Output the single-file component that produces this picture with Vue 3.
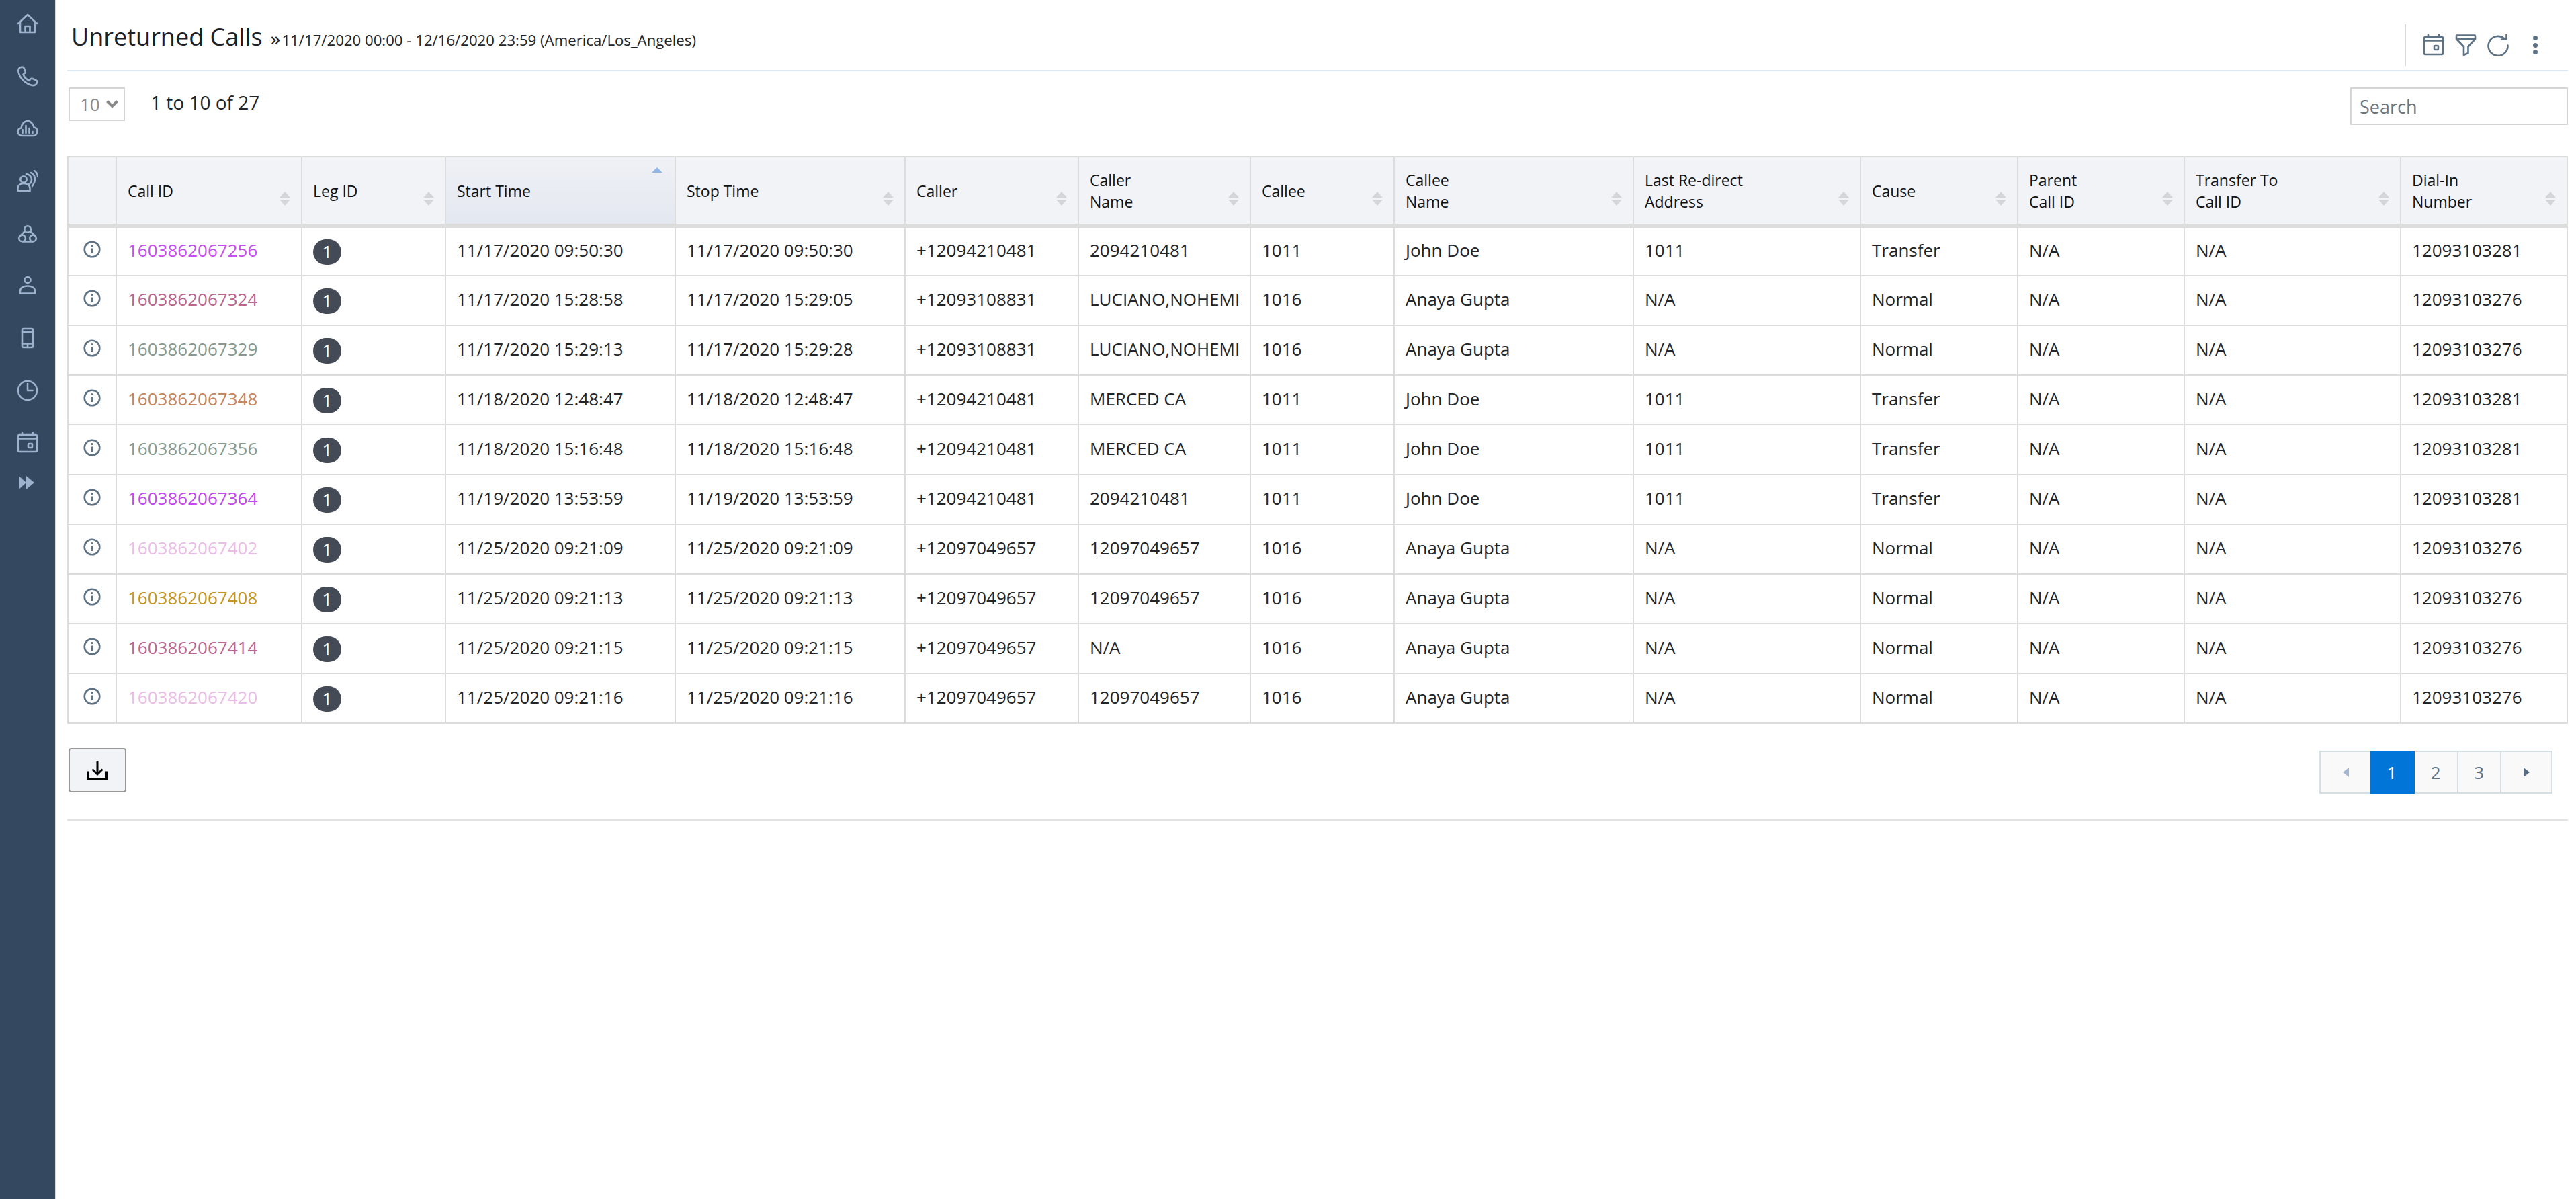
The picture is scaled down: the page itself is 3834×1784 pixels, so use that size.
<script setup>
const columns = [
  { key: 'info', label: [], width: 72 },
  { key: 'id', label: ['Call ID'], width: 276 },
  { key: 'leg', label: ['Leg ID'], width: 214 },
  { key: 'start', label: ['Start Time'], width: 342, sorted: true },
  { key: 'stop', label: ['Stop Time'], width: 342 },
  { key: 'caller', label: ['Caller'], width: 258 },
  { key: 'callerName', label: ['Caller', 'Name'], width: 256 },
  { key: 'callee', label: ['Callee'], width: 214 },
  { key: 'calleeName', label: ['Callee', 'Name'], width: 356 },
  { key: 'redirect', label: ['Last Re-direct', 'Address'], width: 338 },
  { key: 'cause', label: ['Cause'], width: 234 },
  { key: 'parent', label: ['Parent', 'Call ID'], width: 248 },
  { key: 'transfer', label: ['Transfer To', 'Call ID'], width: 322 },
  { key: 'dial', label: ['Dial-In', 'Number'], width: 248 }
]

// widths above follow the table's real column sizes
const johnDoe = { callee: '1011', calleeName: 'John Doe', redirect: '1011', cause: 'Transfer', dial: '12093103281' }
const anaya = { callee: '1016', calleeName: 'Anaya Gupta', redirect: 'N/A', cause: 'Normal', dial: '12093103276' }

const rows = [
  { id: '1603862067256', color: '#c64df0', start: '11/17/2020 09:50:30', stop: '11/17/2020 09:50:30', caller: '+12094210481', callerName: '2094210481', ...johnDoe },
  { id: '1603862067324', color: '#b9658f', start: '11/17/2020 15:28:58', stop: '11/17/2020 15:29:05', caller: '+12093108831', callerName: 'LUCIANO,NOHEMI', ...anaya },
  { id: '1603862067329', color: '#85998f', start: '11/17/2020 15:29:13', stop: '11/17/2020 15:29:28', caller: '+12093108831', callerName: 'LUCIANO,NOHEMI', ...anaya },
  { id: '1603862067348', color: '#c4845d', start: '11/18/2020 12:48:47', stop: '11/18/2020 12:48:47', caller: '+12094210481', callerName: 'MERCED CA', ...johnDoe },
  { id: '1603862067356', color: '#85998f', start: '11/18/2020 15:16:48', stop: '11/18/2020 15:16:48', caller: '+12094210481', callerName: 'MERCED CA', ...johnDoe },
  { id: '1603862067364', color: '#c247f0', start: '11/19/2020 13:53:59', stop: '11/19/2020 13:53:59', caller: '+12094210481', callerName: '2094210481', ...johnDoe },
  { id: '1603862067402', color: '#ebbce8', start: '11/25/2020 09:21:09', stop: '11/25/2020 09:21:09', caller: '+12097049657', callerName: '12097049657', ...anaya },
  { id: '1603862067408', color: '#c39420', start: '11/25/2020 09:21:13', stop: '11/25/2020 09:21:13', caller: '+12097049657', callerName: '12097049657', ...anaya },
  { id: '1603862067414', color: '#b9658f', start: '11/25/2020 09:21:15', stop: '11/25/2020 09:21:15', caller: '+12097049657', callerName: 'N/A', ...anaya },
  { id: '1603862067420', color: '#ebbce8', start: '11/25/2020 09:21:16', stop: '11/25/2020 09:21:16', caller: '+12097049657', callerName: '12097049657', ...anaya }
]
</script>

<template>
  <div class="page">
    <!-- Left navigation -->
    <aside class="sidebar">
      <nav class="nav">
        <span class="nav-item">
          <svg viewBox="0 0 32 32" class="icon"><path d="M2 16 16 3l14 13M5 13.5V29h22V13.500M12.500 29v-9h7v9" /></svg>
        </span>
        <span class="nav-item">
          <svg viewBox="0 0 32 32" class="icon"><path d="M6 3C3 4 2 7 2.500 10 4 19 13 28 23 30c3 .5 6-1 7-4 .5-2-.5-3.500-2-4l-4.500-2c-1.500-.5-3 0-4 1.500l-1 1.500c-4.500-2-7.500-5-9-9.500l1.500-1c1.500-1 2-2.500 1.500-4l-2-4.500C9.800 2.800 7.800 2.400 6 3Z" /></svg>
        </span>
        <span class="nav-item">
          <svg viewBox="0 0 32 32" class="icon"><path d="M8 27c-4 0-6.500-3-6.500-6s2-5 5-5.500C7 10 11 5 16 5c5 0 8.500 5 9.500 9.500 3 .5 5 3 5 6 0 3.500-2.500 6.500-6 6.500ZM8.500 18v5M13.500 12v11M18.500 16v7M23.500 21v2" /></svg>
        </span>
        <span class="nav-item">
          <svg viewBox="0 0 32 32" class="icon"><circle cx="10" cy="14" r="4.700" /><path d="M1.500 31v-4c0-4 3.500-7 8.500-7s9.500 3 9.500 7v4ZM14 6c4 0 8 4 8 8 0 3-2 6-4 7M21 4c4 2 6 6 6 10s-2 7-4 10M26 1c3 2 5 5 5 9" /></svg>
        </span>
        <span class="nav-item">
          <svg viewBox="0 0 32 32" class="icon"><circle cx="16" cy="10" r="4.800" /><circle cx="8" cy="23.500" r="4.800" /><circle cx="24" cy="23.500" r="4.800" /><path d="M12 13 5 20M20 13l7 7M8 28.500h16" /></svg>
        </span>
        <span class="nav-item">
          <svg viewBox="0 0 32 32" class="icon"><circle cx="16" cy="7.500" r="4.500" /><path d="M5 27.500V24c0-5 5-7.500 11-7.500S27 19 27 24v3.500Z" /></svg>
        </span>
        <span class="nav-item">
          <svg viewBox="0 0 32 32" class="icon"><rect x="8" y="2" width="16" height="28" rx="2" /><path d="M8 7h16M8 24.500h16M16 24.500V30" /></svg>
        </span>
        <span class="nav-item">
          <svg viewBox="0 0 32 32" class="icon"><circle cx="16" cy="16" r="14" /><path d="M16 6v10h7.500" /></svg>
        </span>
        <span class="nav-item">
          <svg viewBox="0 0 32 32" class="icon"><rect x="2" y="4" width="28" height="25" rx="2" /><path d="M2 9.500h28M8 1v3M24 1v3" /><rect x="17" y="17" width="6" height="6" rx="1" /></svg>
        </span>
        <span class="nav-more">
          <svg viewBox="0 0 32 32" class="icon-solid"><path d="M3 6 14 16 3 26ZM14 6l12 10-12 10Z" /></svg>
        </span>
      </nav>
    </aside>

    <main class="main">
      <header class="topbar">
        <div class="title-group">
          <h1 class="title">Unreturned Calls</h1>
          <span class="chevrons">»</span>
          <span class="range">11/17/2020 00:00 - 12/16/2020 23:59 (America/Los_Angeles)</span>
        </div>
        <div class="tools">
          <svg viewBox="0 0 32 32" class="tool"><rect x="2" y="4" width="28" height="26" rx="2" /><path d="M2 9.500h28M8 1v3M24 1v3" /><rect x="17" y="17" width="6" height="6" rx="1" /></svg>
          <svg viewBox="0 0 32 32" class="tool"><path d="M2 2.500c0-.5.5-1 1-1h26c.5 0 1 .5 1 1V7L19.500 18.500V28L13 31V18.500L2 7ZM2 7h28" /></svg>
          <svg viewBox="0 0 32 32" class="tool"><path d="M25 6A14.500 14.500 0 1 0 30.500 16.500M28.500 0v7.500H21" /></svg>
          <span class="dots"><i></i><i></i><i></i></span>
        </div>
      </header>

      <section class="controls">
        <div class="count-group">
          <div class="page-size">
            <span>10</span>
            <svg viewBox="0 0 18 12" class="chevron"><path d="M1.500 1.500 9 9l7.500-7.500" /></svg>
          </div>
          <span class="count">1 to 10 of 27</span>
        </div>
        <input class="search" type="text" placeholder="Search" />
      </section>

      <table class="grid">
        <colgroup>
          <col v-for="col in columns" :key="col.key" :style="{ width: col.width + 'px' }" />
        </colgroup>
        <thead>
          <tr>
            <th v-for="col in columns" :key="col.key" :class="{ sorted: col.sorted }">
              <span v-for="line in col.label" :key="line" class="th-line">{{ line }}</span>
              <span v-if="col.sorted" class="sort-up"></span>
              <span v-else-if="col.label.length" class="sort"></span>
            </th>
          </tr>
        </thead>
        <tbody>
          <tr v-for="row in rows" :key="row.id">
            <td class="info-cell">
              <svg viewBox="0 0 26 26" class="info">
                <circle cx="13" cy="13" r="11.300" />
                <path d="M13 11.500V19" />
                <circle cx="13" cy="7.600" r="1.700" class="info-dot" />
              </svg>
            </td>
            <td :style="{ color: row.color }">{{ row.id }}</td>
            <td><span class="badge">1</span></td>
            <td>{{ row.start }}</td>
            <td>{{ row.stop }}</td>
            <td>{{ row.caller }}</td>
            <td>{{ row.callerName }}</td>
            <td>{{ row.callee }}</td>
            <td>{{ row.calleeName }}</td>
            <td>{{ row.redirect }}</td>
            <td>{{ row.cause }}</td>
            <td>N/A</td>
            <td>N/A</td>
            <td>{{ row.dial }}</td>
          </tr>
        </tbody>
      </table>

      <footer class="footer">
        <button class="download" type="button">
          <svg viewBox="0 0 30 28" class="download-icon"><path d="M15 1v19M7.500 12.500 15 20l7.500-7.500M1.500 15.500v11h27v-11" /></svg>
        </button>
        <div class="pager">
          <span class="pg arrow prev"><i></i></span>
          <span class="pg num active">1</span>
          <span class="pg num">2</span>
          <span class="pg num">3</span>
          <span class="pg arrow next"><i></i></span>
        </div>
      </footer>
    </main>
  </div>
</template>

<style scoped>
.page {
  display: flex;
  min-height: 1784px;
  background: #fff;
  font-family: "Open Sans", "Liberation Sans", sans-serif;
  color: #212529;
}

/* Sidebar */
.sidebar {
  width: 82px;
  flex: none;
  background: #34485f;
  border-right: 2px solid #d9d9d9;
}

.nav {
  display: flex;
  flex-direction: column;
  align-items: center;
  gap: 8px;
}

.nav-item {
  height: 70px;
  display: flex;
  align-items: center;
  justify-content: center;
}

.nav-more {
  height: 32px;
  display: flex;
  align-items: center;
}

.icon {
  width: 32px;
  height: 32px;
  fill: none;
  stroke: #9db2cd;
  stroke-width: 2.6;
  stroke-linejoin: round;
  stroke-linecap: round;
}

.icon-solid {
  width: 32px;
  height: 32px;
  fill: #9db2cd;
}

/* Main column */
.main {
  flex: 1;
  min-width: 0;
  padding: 0 12px 0 16px;
}

.topbar {
  display: flex;
  justify-content: space-between;
  box-sizing: border-box;
  height: 106px;
  border-bottom: 2px solid #dde8f3;
}

.title-group {
  display: flex;
  align-items: baseline;
  padding: 30px 0 0 6px;
}

.title {
  margin: 0;
  font-size: 36px;
  line-height: 50px;
  font-weight: 400;
  color: #1c2127;
}

.chevrons {
  margin-left: 12px;
  font-size: 30px;
  line-height: 30px;
}

.range {
  font-size: 22.200px;
  line-height: 30px;
  margin-left: 2px;
}

.tools {
  display: flex;
  align-items: center;
  height: 62px;
  margin: 36px 45px 0 0;
  padding-left: 25px;
  gap: 16px;
  border-left: 2px solid #dadada;
}

.tool {
  width: 32px;
  height: 32px;
  fill: none;
  stroke: #5d7285;
  stroke-width: 2.6;
  stroke-linejoin: round;
  stroke-linecap: round;
}

.dots {
  display: flex;
  flex-direction: column;
  gap: 3.500px;
  margin-left: 20px;
}

.dots i {
  display: block;
  width: 7px;
  height: 7px;
  border-radius: 50%;
  background: #5d7285;
}

/* Controls row */
.controls {
  display: flex;
  justify-content: space-between;
  align-items: flex-start;
  margin-top: 24px;
  margin-bottom: 46px;
}

.count-group {
  display: flex;
  align-items: flex-start;
  padding-left: 2px;
}

.page-size {
  width: 84px;
  height: 50px;
  box-sizing: border-box;
  border: 2px solid #d5d5d5;
  padding: 0 8px 0 15px;
  display: flex;
  align-items: center;
  justify-content: space-between;
  font-size: 26px;
  color: #8a8a8a;
}

.chevron {
  width: 18px;
  height: 12px;
  fill: none;
  stroke: #8a8a8a;
  stroke-width: 4;
}

.count {
  margin-left: 38px;
  font-size: 28px;
  line-height: 44px;
}

.search {
  width: 324px;
  height: 56px;
  box-sizing: border-box;
  border: 2px solid #d5d5d5;
  padding: 0 12px;
  font-family: inherit;
  font-size: 27px;
  color: #495057;
  outline: none;
}

.search::placeholder {
  color: #6c757d;
  opacity: 1;
}

/* Table */
.grid {
  width: 3722px;
  border-collapse: collapse;
  table-layout: fixed;
  font-size: 26px;
}

.grid th,
.grid td {
  border: 2px solid #dcdcdc;
  padding: 0 16px;
  text-align: left;
  white-space: nowrap;
}

.grid thead tr {
  height: 103px;
}

.grid tbody tr {
  height: 74px;
}

.grid th {
  position: relative;
  background: #f1f3f7;
  border-bottom-width: 6px;
  font-size: 23px;
  font-weight: 400;
  color: #0e1114;
}

.grid th.sorted {
  background: linear-gradient(180deg, #eff1f6 0%, #e3e7ef 100%);
}

.th-line {
  display: block;
  line-height: 32px;
}

.sort {
  position: absolute;
  top: 51px;
  right: 16px;
  width: 0;
  height: 0;
  border-left: 8px solid transparent;
  border-right: 8px solid transparent;
  border-bottom: 9px solid #d3d5da;
}

.sort::after {
  content: '';
  position: absolute;
  top: 12px;
  left: -8px;
  width: 0;
  height: 0;
  border-left: 8px solid transparent;
  border-right: 8px solid transparent;
  border-top: 9px solid #d3d5da;
}

.sort-up {
  position: absolute;
  top: 15px;
  right: 18px;
  width: 0;
  height: 0;
  border-left: 8px solid transparent;
  border-right: 8px solid transparent;
  border-bottom: 8px solid #8fb6e4;
}

.grid td {
  padding-bottom: 5px;
  line-height: 30px;
}

.grid td.info-cell {
  padding: 0 0 7px;
  text-align: center;
}

.info {
  display: block;
  width: 26px;
  height: 26px;
  margin: 0 auto;
  fill: none;
  stroke: #5f7385;
  stroke-width: 2.600;
}

.info-dot {
  fill: #5f7385;
  stroke: none;
}

.badge {
  display: inline-block;
  width: 42px;
  height: 38px;
  line-height: 36px;
  border-radius: 19px;
  background: #444b56;
  color: #fff;
  text-align: center;
  vertical-align: middle;
  margin-top: 6px;
}

/* Footer */
.footer {
  display: flex;
  justify-content: space-between;
  align-items: flex-start;
  box-sizing: border-box;
  margin-top: 36px;
  height: 108px;
  padding-left: 2px;
  padding-right: 23px;
  border-bottom: 2px solid #e2e2e2;
}

.download {
  width: 86px;
  height: 66px;
  padding: 0;
  box-sizing: border-box;
  display: flex;
  align-items: center;
  justify-content: center;
  background: #f1f3f7;
  border: 2px solid #999;
  border-radius: 4px;
}

.download-icon {
  width: 30px;
  height: 28px;
  fill: none;
  stroke: #000;
  stroke-width: 3;
}

.pager {
  display: flex;
  margin-top: 4px;
  height: 64px;
}

.pg {
  box-sizing: border-box;
  display: flex;
  align-items: center;
  justify-content: center;
  height: 64px;
  background: #f9f9f9;
  border: 2px solid #d3dfe2;
  border-left-width: 0;
  font-size: 26px;
  color: #5d7285;
}

.pg.num {
  width: 64.500px;
}

.pg.arrow {
  width: 76px;
}

.pg.prev {
  border-left-width: 2px;
  border-right-width: 0;
}

.pg.active {
  width: 66px;
  background: #0275d8;
  border-color: #0275d8;
  color: #fff;
}

.arrow i {
  display: block;
  width: 0;
  height: 0;
  border-top: 7.500px solid transparent;
  border-bottom: 7.500px solid transparent;
}

.prev i {
  border-right: 9px solid #a3b7d1;
}

.next i {
  border-left: 9px solid #5a6d80;
}
</style>

<style>
html,
body {
  margin: 0;
  background: #fff;
}
</style>
